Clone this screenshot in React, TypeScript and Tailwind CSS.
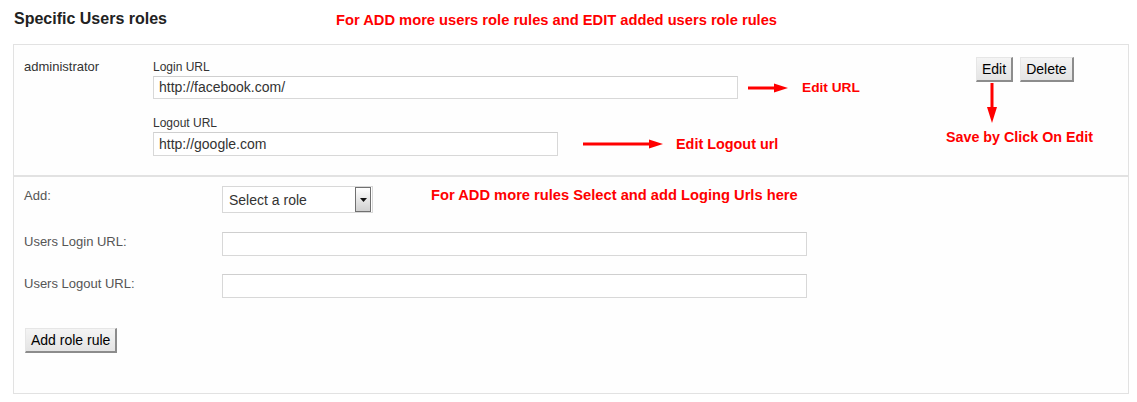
import React from "react";

function ArrowRight({ width }: { width: number }) {
    return (
        <svg width={width} height="10" viewBox={`0 0 ${width} 10`} className="shrink-0">
            <rect x="0" y="3.5" width={width - 12} height="3" fill="#ff0000" />
            <polygon points={`${width - 14},0.5 ${width},5 ${width - 14},9.5`} fill="#ff0000" />
        </svg>
    );
}

function ArrowDown() {
    return (
        <svg width="12" height="40" viewBox="0 0 12 40" className="shrink-0">
            <rect x="4.5" y="0" width="3" height="26" fill="#ff0000" />
            <polygon points="1,24 11,24 6,40" fill="#ff0000" />
        </svg>
    );
}

function OldButton({ label }: { label: string }) {
    return (
        <button className="h-[25px] px-[5px] text-[14px] leading-none text-black bg-gradient-to-b from-[#f4f4f4] to-[#e4e4e4] border border-t-[#e6e6e6] border-l-[#e6e6e6] border-r-2 border-b-2 border-r-[#8c8c8c] border-b-[#8c8c8c]">
            {label}
        </button>
    );
}

function TextField({ value, className }: { value?: string; className: string }) {
    return (
        <div className={`${className} border border-[#d8d8d8] border-t-[#cfcfcf] bg-white flex items-center pl-[5px] text-[14px] text-[#333]`}>
            {value}
        </div>
    );
}

function Note({ children, className = "" }: { children: React.ReactNode; className?: string }) {
    return <p className={`font-bold text-[#ff0000] leading-[16px] whitespace-nowrap ${className}`}>{children}</p>;
}

export default function App() {
    return (
        <div className="w-[1137px] h-[402px] bg-white overflow-hidden font-['Liberation_Sans',Arial,sans-serif]">
            {/* title row */}
            <div className="h-[44px] flex items-center pl-[14px] pb-[7px]">
                <h1 className="text-[16px] font-bold text-[#222] w-[322px]">Specific Users roles</h1>
                <Note className="text-[14.7px] mt-[3px]">For ADD more users role rules and EDIT added users role rules</Note>
            </div>

            <div className="ml-[13px] w-[1116px] h-[350px] border border-[#e2e2e2] bg-[#fefefe]">
                {/* existing rule */}
                <div className="h-[132px] flex border-b-2 border-[#e2e2e2]">
                    <div className="w-[139px] pl-[10px] pt-[15px] text-[13px] leading-[14px] text-[#333]">administrator</div>
                    <div className="w-[793px] pt-[15px] flex flex-col">
                        <p className="text-[12px] leading-[14px] text-[#333]">Login URL</p>
                        <div className="mt-[2px] flex items-center">
                            <TextField value="http://facebook.com/" className="w-[585px] h-[23px]" />
                            <div className="ml-[10px]"><ArrowRight width={40} /></div>
                            <Note className="text-[13.7px] ml-[14px]">Edit URL</Note>
                        </div>
                        <p className="mt-[17px] text-[12px] leading-[14px] text-[#333]">Logout URL</p>
                        <div className="mt-[2px] flex items-center">
                            <TextField value="http://google.com" className="w-[405px] h-[24px]" />
                            <div className="ml-[25px]"><ArrowRight width={80} /></div>
                            <Note className="text-[14.4px] ml-[13px]">Edit Logout url</Note>
                        </div>
                    </div>
                    <div className="pt-[12px] flex flex-col">
                        <div className="pl-[30px] flex gap-[7px]">
                            <OldButton label="Edit" />
                            <OldButton label="Delete" />
                        </div>
                        <div className="ml-[40px] mt-[1px]"><ArrowDown /></div>
                        <Note className="text-[14.3px] mt-[6px]">Save by Click On Edit</Note>
                    </div>
                </div>

                {/* add new rule */}
                <div className="pt-[9px] pl-[10px] flex flex-col text-[13px] leading-[14px] text-[#555]">
                    <div className="flex items-start">
                        <p className="w-[198px] mt-[3px]">Add:</p>
                        <div className="w-[151px] h-[27px] border border-[#d8d8d8] bg-white flex items-center">
                            <span className="flex-1 pl-[6px] text-[14px] text-[#333]">Select a role</span>
                            <span className="w-[16px] h-[25px] mr-px border border-[#707070] bg-gradient-to-b from-white to-[#d0d0d0] flex items-center justify-center">
                                <svg width="7" height="4" viewBox="0 0 7 4"><polygon points="0,0 7,0 3.5,4" fill="#111" /></svg>
                            </span>
                        </div>
                        <Note className="text-[14.7px] ml-[58px] mt-[1px]">For ADD more rules Select and add Loging Urls here</Note>
                    </div>
                    <div className="mt-[19px] flex items-start">
                        <p className="w-[198px] mt-[3px]">Users Login URL:</p>
                        <TextField className="w-[585px] h-[24px]" />
                    </div>
                    <div className="mt-[18px] flex items-start">
                        <p className="w-[198px] mt-[3px]">Users Logout URL:</p>
                        <TextField className="w-[585px] h-[24px]" />
                    </div>
                    <div className="mt-[30px] pl-px">
                        <OldButton label="Add role rule" />
                    </div>
                </div>
            </div>
        </div>
    );
}
